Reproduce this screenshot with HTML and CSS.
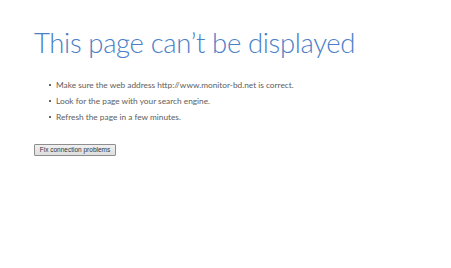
FILE: index.html
```html
<!DOCTYPE html>
<html>
<head>
  <meta charset="utf-8">
  <title>This page can't be displayed</title>
  <link rel="stylesheet" href="styles.css">
</head>
<body>
  <div class="main">
    <h1 class="title">This page can’t be displayed</h1>
    <ul class="tips">
      <li>Make sure the web address http://www.monitor-bd.net is correct.</li>
      <li>Look for the page with your search engine.</li>
      <li>Refresh the page in a few minutes.</li>
    </ul>
    <button class="fix-btn" type="button">Fix connection problems</button>
  </div>
</body>
</html>
```

FILE: styles.css
```css
body {
  margin: 0;
  background: #fff;
  font-family: Lato, 'Segoe UI', sans-serif;
}

.main {
  padding: 25px 0 0 34px;
}

/* Big blue heading */
.title {
  margin: 0;
  font-size: 27.5px;
  font-weight: 300;
  line-height: 36px;
  letter-spacing: -0.35px;
  color: #4a80c8;
}

.tips {
  margin: 16px 0 0;
  padding: 0 0 0 22px;
  list-style: none;
}

.tips li {
  position: relative;
  font-size: 8.3px;
  line-height: 16px;
  color: #5e5e5e;
}

.tips li::before {
  content: "";
  position: absolute;
  left: -7px;
  top: 7px;
  width: 2px;
  height: 2px;
  background: #666;
}

.fix-btn {
  display: block;
  margin-top: 19px;
  width: 82px;
  height: 12px;
  padding: 0;
  font-family: 'Liberation Sans', Arial, sans-serif;
  font-size: 6.5px;
  line-height: 10px;
  color: #333;
  background: linear-gradient(#f0f0f0, #dedede);
  border: 1px solid #8e8e8e;
  border-radius: 1px;
}
```
